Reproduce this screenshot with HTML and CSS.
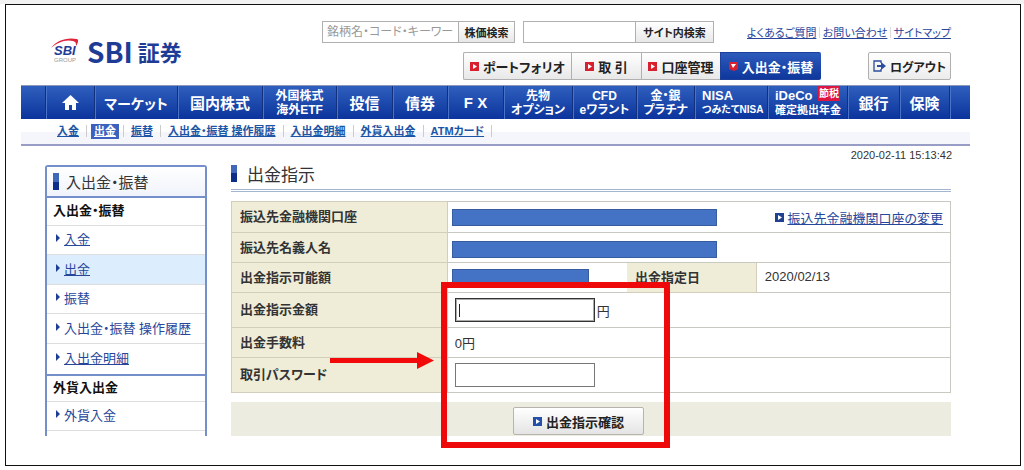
FILE: index.html
```html
<!DOCTYPE html>
<html lang="ja">
<head>
<meta charset="utf-8">
<title>出金指示 | SBI証券</title>
<link rel="stylesheet" href="styles.css">
</head>
<body>
<div class="frame">
  <header class="header">
    <a class="logo" href="#">
      <svg class="logo-mark" width="28" height="26" viewBox="0 0 28 26" aria-label="SBI GROUP">
        <path d="M0 10C5 3 15-1 26 1c2 1 1 4-1 7 0-3 0-4-3-5C14 1 6 5 0 10z" fill="#e0243c"/>
        <text class="mark-main" x="3" y="17">SBI</text>
        <text class="mark-sub" x="3" y="24">GROUP</text>
      </svg>
      <span class="logo-latin">SBI</span><span class="logo-kanji">証券</span>
    </a>
    <div class="tools">
      <div class="tools-row">
        <form class="search">
          <input class="search-box" type="text" placeholder="銘柄名・コード・キーワード" aria-label="銘柄名・コード・キーワード">
          <button class="search-button" type="button">株価検索</button>
        </form>
        <form class="search search-site">
          <input class="search-box" type="text" aria-label="サイト内検索">
          <button class="search-button" type="button">サイト内検索</button>
        </form>
        <div class="help-links">
          <a href="#">よくあるご質問</a><i></i><a href="#">お問い合わせ</a><i></i><a href="#">サイトマップ</a>
        </div>
      </div>
      <div class="tools-row">
        <div class="tabs">
          <a class="tab" href="#"><svg class="mark" viewBox="0 0 9 9"><path d="M0 0h9v9H0z" fill="#d9202e"/><path d="M3 2l4 2.500-4 2.500z" fill="#fff"/></svg>ポートフォリオ</a>
          <a class="tab" href="#"><svg class="mark" viewBox="0 0 9 9"><path d="M0 0h9v9H0z" fill="#d9202e"/><path d="M3 2l4 2.500-4 2.500z" fill="#fff"/></svg>取 引</a>
          <a class="tab" href="#"><svg class="mark" viewBox="0 0 9 9"><path d="M0 0h9v9H0z" fill="#d9202e"/><path d="M3 2l4 2.500-4 2.500z" fill="#fff"/></svg>口座管理</a>
          <a class="tab tab-current" href="#"><svg class="mark" viewBox="0 0 9 9"><path d="M0 0h9v7L5 9 0 7z" fill="#d9202e"/><path d="M2 2h5L4 6z" fill="#fff"/></svg>入出金・振替</a>
        </div>
        <button class="logout" type="button"><svg class="logout-icon" viewBox="0 0 13 12"><path d="M8 3V1H1v10h7V9" fill="none" stroke="#2b4d9c" stroke-width="1.300"/><path d="M4 5h4V2l5 4-5 4V7H4z" fill="#2b4d9c"/></svg>ログアウト</button>
      </div>
    </div>
  </header>

  <nav class="nav" aria-label="メイン">
    <span></span>
    <a href="#" aria-label="ホーム"><svg class="home" viewBox="0 0 17 15"><path d="M8.500 0L17 8h-3v7h-4v-5H7v5H3V8H0z" fill="#fff"/></svg></a>
    <a class="kana" href="#">マーケット</a>
    <a href="#">国内株式</a>
    <a class="two" href="#">外国株式<br>海外ETF</a>
    <a href="#">投信</a>
    <a href="#">債券</a>
    <a href="#">F X</a>
    <a class="two" href="#">先物<br>オプション</a>
    <a class="two" href="#">CFD<br>eワラント</a>
    <a class="two" href="#">金・銀<br>プラチナ</a>
    <a class="two left" href="#"><span class="latin">NISA</span><small>つみたてNISA</small></a>
    <a class="two left" href="#"><span class="latin">iDeCo</span><small class="kanji">確定拠出年金</small><em class="badge">節税</em></a>
    <a href="#">銀行</a>
    <a href="#">保険</a>
    <span></span>
  </nav>

  <nav class="subnav" aria-label="入出金・振替">
    <a href="#">入金</a><i></i><a class="subnav-current" href="#">出金</a><i></i><a href="#">振替</a><i></i><a href="#">入出金・振替 操作履歴</a><i></i><a href="#">入出金明細</a><i></i><a href="#">外貨入出金</a><i></i><a href="#">ATMカード</a><i></i>
  </nav>
  <p class="timestamp">2020-02-11 15:13:42</p>

  <div class="columns">
    <aside class="side">
      <h2 class="side-title">入出金・振替</h2>
      <h3 class="side-group">入出金・振替</h3>
      <ul class="side-list">
        <li><a class="lined" href="#">入金</a></li>
        <li class="side-current"><a class="lined" href="#">出金</a></li>
        <li><a href="#">振替</a></li>
        <li><a href="#">入出金・振替 操作履歴</a></li>
        <li><a class="lined" href="#">入出金明細</a></li>
      </ul>
      <h3 class="side-group side-group-next">外貨入出金</h3>
      <ul class="side-list">
        <li><a href="#">外貨入金</a></li>
      </ul>
    </aside>

    <main class="main">
      <h1 class="title">出金指示</h1>
      <form class="order">
        <table class="details">
          <colgroup><col class="col-a"><col class="col-b"><col class="col-c"><col class="col-d"></colgroup>
          <tr class="first">
            <th scope="row">振込先金融機関口座</th>
            <td colspan="3"><div class="account"><span class="mask"></span><a class="change" href="#"><svg class="mark" viewBox="0 0 9 9"><path d="M0 0h9v9H0z" fill="#1f4190"/><path d="M3 2l4 2.500-4 2.500z" fill="#fff"/></svg><u>振込先金融機関口座の変更</u></a></div></td>
          </tr>
          <tr>
            <th scope="row">振込先名義人名</th>
            <td colspan="3"><span class="mask mask-name"></span></td>
          </tr>
          <tr>
            <th scope="row">出金指示可能額</th>
            <td><span class="mask mask-short"></span></td>
            <th scope="row">出金指定日</th>
            <td class="date">2020/02/13</td>
          </tr>
          <tr class="tall">
            <th scope="row"><label for="amount">出金指示金額</label></th>
            <td colspan="3"><div class="entry"><input class="field field-active" id="amount" type="text">円</div></td>
          </tr>
          <tr>
            <th scope="row">出金手数料</th>
            <td colspan="3"><div class="entry">0円</div></td>
          </tr>
          <tr class="tall">
            <th scope="row"><label for="password">取引パスワード</label></th>
            <td colspan="3"><div class="entry"><input class="field" id="password" type="password"></div></td>
          </tr>
        </table>
        <div class="actions">
          <button class="confirm" type="button"><svg class="mark" viewBox="0 0 9 9"><path d="M0 0h9v9H0z" fill="#2450a8"/><path d="M3 2l4 2.500-4 2.500z" fill="#fff"/></svg>出金指示確認</button>
        </div>
        <div class="callout"></div>
        <svg class="arrow" viewBox="0 0 104 17"><path d="M0 6h87V0l17 8.500L87 17v-6H0z" fill="#f20a0a"/></svg>
      </form>
    </main>
  </div>
</div>
</body>
</html>
```
FILE: styles.css
```css
* { box-sizing: border-box; }

body {
  margin: 0;
  padding: 4px 3px 5px 5px;
  background: linear-gradient(#f2f2f2 4px, #fff 4px);
  color: #333;
  font-family: "Liberation Sans", "Noto Sans CJK JP", sans-serif;
  font-size: 13px;
  font-feature-settings: "palt";
}

a { color: #27469a; text-decoration: none; }
h1, h2, h3, p, ul { margin: 0; padding: 0; font-weight: normal; }
ul { list-style: none; }
button, input { font: inherit; font-feature-settings: inherit; }

.frame {
  padding: 16px 50px 29px 15px;
  border: 1px solid #111;
  background: #fff;
}

/* header */
.header {
  display: flex;
  justify-content: space-between;
  padding: 0 19px 5px 30px;
}
.logo {
  display: flex;
  align-items: center;
  color: #1e3c96;
  font-family: "Noto Sans CJK JP", sans-serif;
  line-height: 28px;
}
.logo-mark { margin-right: 8px; }
.mark-main { font: italic bold 13px "Liberation Sans", sans-serif; fill: #1e3c96; }
.mark-sub { font: 6px "Liberation Sans", sans-serif; fill: #999; }
.logo-latin { margin-right: 5px; font-size: 28px; font-weight: bold; }
.logo-kanji { font-size: 22px; font-weight: bold; }

.tools { display: flex; flex-direction: column; gap: 9px; }
.tools-row { display: flex; justify-content: flex-end; align-items: center; }

.search {
  display: flex;
  width: 193px;
  height: 22px;
  margin-right: 8px;
  border: 1px solid #b0b0b0;
}
.search-site { width: 191px; margin-right: 33px; }
.search-box {
  flex: 1;
  min-width: 0;
  padding: 0 4px;
  border: 0;
  background: #fff;
  font-size: 12px;
}
.search-box::placeholder { color: #999; }
.search-button {
  width: 56px;
  padding: 0;
  border: 0;
  border-left: 1px solid #b0b0b0;
  background: linear-gradient(#fff, #e8e8e8);
  color: #222;
  font-size: 11px;
  font-weight: bold;
}
.search-site .search-button { width: 78px; }
.help-links {
  display: flex;
  justify-content: space-between;
  align-items: center;
  width: 204px;
  font-size: 11px;
}
.help-links a { text-decoration: underline; }
.help-links i { width: 1px; height: 11px; background: #ddd; }

.tabs { display: flex; height: 28px; margin-right: 47px; }
.tab {
  display: flex;
  align-items: center;
  justify-content: center;
  gap: 4px;
  width: 79px;
  border: 1px solid #b0b0b0;
  border-right: 0;
  background: linear-gradient(#fff, #e8e8e8);
  color: #222;
  font-weight: bold;
  white-space: nowrap;
}
.tab:nth-child(1) { width: 108px; border-radius: 2px 0 0 2px; }
.tab:nth-child(2) { width: 70px; }
.tab-current {
  width: 101px;
  border-color: #1c409c;
  border-radius: 0 2px 2px 0;
  background: linear-gradient(#2c5abb, #0f379c);
  color: #fff;
}
.mark { flex: none; width: 9px; height: 9px; }
.logout {
  display: flex;
  align-items: center;
  justify-content: center;
  gap: 4px;
  width: 83px;
  height: 28px;
  padding: 0;
  border: 1px solid #b0b0b0;
  border-radius: 2px;
  background: linear-gradient(#fff, #ececec);
  color: #222;
  font-size: 12px;
  font-weight: bold;
}
.logout-icon { width: 13px; height: 12px; }

/* main navigation */
.nav {
  display: grid;
  grid-template-columns: 24fr 49fr 83fr 85fr 74fr 56fr 55fr 56fr 69fr 64fr 58fr 73fr 80fr 52fr 50fr 21fr;
  height: 34px;
  border-top: 1px solid #8b98b8;
  background: linear-gradient(#2f5fbe, #0b349c);
}
.nav > * + * {
  border-left: 1px solid #12307c;
  box-shadow: inset 1px 0 #4a72c6;
}
.nav a {
  position: relative;
  display: flex;
  align-items: center;
  justify-content: center;
  color: #fff;
  font-size: 15px;
  font-weight: bold;
  white-space: nowrap;
}
.nav .kana { font-size: 14px; }
.nav .two {
  display: block;
  padding-top: 3px;
  font-size: 12px;
  line-height: 14px;
  text-align: center;
}
.nav .left { padding-left: 7px; text-align: left; }
.latin { display: block; font-size: 13px; }
.nav small { display: block; font-size: 10px; }
.nav .kanji { font-size: 11px; }
.home { width: 17px; height: 15px; }
.badge {
  position: absolute;
  top: 0;
  right: 7px;
  padding: 0 1px;
  background: #dc1640;
  font-size: 10px;
  font-style: normal;
  line-height: 15px;
}

.subnav {
  display: flex;
  align-items: center;
  gap: 7px;
  height: 27px;
  padding: 0 0 1px 36px;
  border-bottom: 2px solid #989dc6;
  background: linear-gradient(#fff 13px, #f4f6fb 13px);
  font-size: 11px;
  font-weight: bold;
}
.subnav a { color: #1c55a5; line-height: 15px; text-decoration: underline; white-space: nowrap; }
.subnav i { width: 1px; height: 12px; background: #ccc; }
.subnav .subnav-current { margin: 0 -3px; padding: 0 3px; background: #3c62bd; color: #fff; }

.timestamp {
  padding-right: 18px;
  font-size: 11px;
  line-height: 19px;
  text-align: right;
}

/* columns */
.columns { display: flex; gap: 24px; padding: 0 19px 0 24px; }
.side {
  flex: none;
  width: 162px;
  border: 2px solid #758fcb;
  border-bottom: 0;
  border-radius: 3px 3px 0 0;
}
.side-title {
  display: flex;
  align-items: center;
  gap: 7px;
  height: 31px;
  padding-left: 6px;
  border-bottom: 2px solid #758fcb;
  background: linear-gradient(#fff, #f0f3fb);
  font-size: 15px;
}
.side-title::before, .title::before {
  content: "";
  width: 6px;
  height: 17px;
  background: linear-gradient(#3f68b9 50%, #0c2d88 50%);
}
.side-group {
  height: 28px;
  padding-left: 6px;
  border-bottom: 1px solid #ddd;
  color: #111;
  font-size: 13px;
  font-weight: bold;
  line-height: 26px;
}
.side-group-next { border-top: 2px solid #758fcb; line-height: 24px; }
.side-list li {
  display: flex;
  align-items: center;
  gap: 4px;
  height: 30px;
  padding-left: 9px;
  border-bottom: 1px solid #ddd;
  line-height: 18px;
}
.side-list li:nth-child(odd) { height: 29px; }
.side-list li:last-child:nth-child(5) { height: 30px; border-bottom: 0; }
.side-list li::before {
  content: "";
  margin-bottom: 4px;
  border: 4px solid transparent;
  border-left-color: #1c3f94;
  border-right: 0;
}
.side-list .side-current { background: #dcedfd; }
.lined { text-decoration: underline; }

.main { flex: 1; }
.title {
  display: flex;
  align-items: center;
  gap: 10px;
  height: 27px;
  margin-bottom: 9px;
  padding-bottom: 8px;
  border-bottom: 3px double #a3b5cf;
  font-size: 17px;
}
.order { position: relative; }
.details { width: 100%; border-collapse: collapse; table-layout: fixed; }
.col-a { width: 30%; }
.col-b { width: 25%; }
.col-c { width: 18%; }
.col-d { width: 27%; }
.details tr { height: 30px; }
.details .first { height: 31px; }
.details .tall { height: 35px; }
.details th, .details td { padding: 0; border: solid #c9c9c2; border-width: 1px 0; text-align: left; }
.details th { padding: 0 0 3px 8px; background: #efecd8; border-color: #d2cebb; }
.details tr > :first-child { border-left-width: 1px; }
.details tr > :last-child { border-right-width: 1px; }
.details td { padding-left: 4px; border-left: 1px solid #d2cebb; }
.details .date { padding: 0 0 3px 8px; }
.account { display: flex; align-items: center; justify-content: space-between; padding-right: 7px; }
.change { display: flex; align-items: center; gap: 3px; }
.mask {
  display: block;
  width: 265px;
  height: 17px;
  border: 1px solid #385d9f;
  background: #4472c4;
}
.mask-name { margin-top: 4px; }
.mask-short { width: 137px; }
.entry { display: flex; align-items: center; gap: 2px; padding-left: 3px; }
.field {
  width: 140px;
  height: 24px;
  padding: 0 3px;
  border: 1px solid #777;
  background: #fff;
}
.field-active {
  border-color: #333;
  outline: 1px solid #aaa;
  outline-offset: -2px;
  background: linear-gradient(#222, #222) 3px 50% / 1px 13px no-repeat #fff;
}
.actions { margin-top: 9px; padding: 5px 0 1px 282px; background: #ecece1; }
.confirm {
  display: flex;
  align-items: center;
  justify-content: center;
  gap: 4px;
  width: 131px;
  height: 28px;
  border: 1px solid #b5b5ad;
  border-radius: 2px;
  background: linear-gradient(#fff, #e4e4e4);
  color: #222;
  font-weight: bold;
}

/* annotations laid over the form */
.callout {
  position: absolute;
  top: 81px;
  left: 210px;
  width: 229px;
  height: 166px;
  border: 6px solid #ee0a0a;
  pointer-events: none;
}
.arrow {
  position: absolute;
  top: 151px;
  left: 99px;
  width: 104px;
  height: 17px;
}
```
